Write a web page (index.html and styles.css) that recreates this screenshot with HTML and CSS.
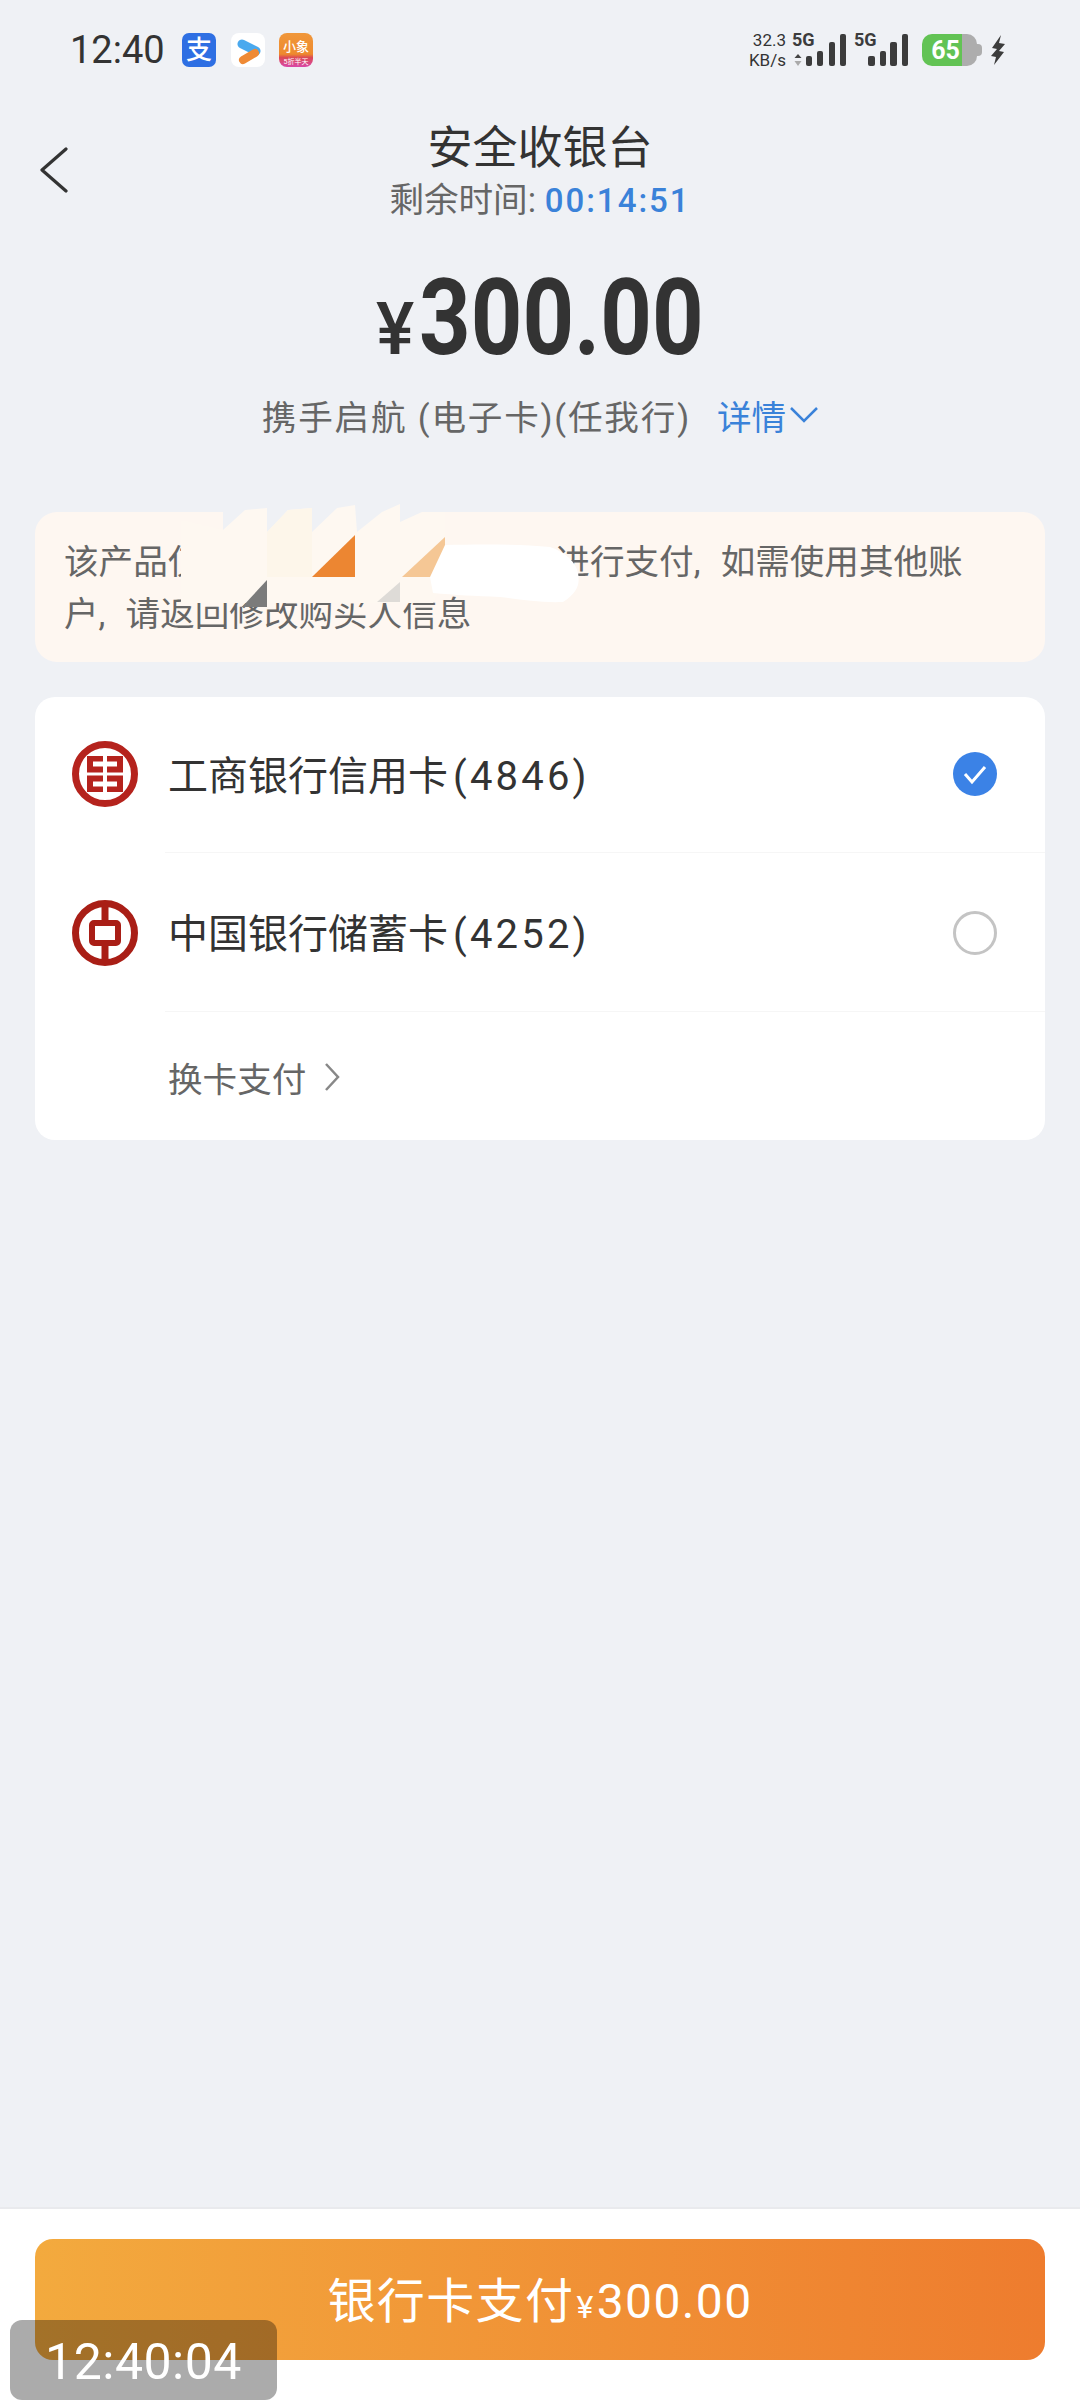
FILE: index.html
```html
<!DOCTYPE html>
<html lang="zh-CN">
<head>
    <meta charset="UTF-8">
    <meta name="viewport" content="width=device-width, initial-scale=1.0">
    <title>安全收银台</title>
    <link rel="stylesheet" href="styles.css">
</head>
<body>
    <div class="status-bar">
        <span class="clock">12:40</span>
        <svg class="app-icon" viewBox="0 0 34 34">
            <rect width="34" height="34" rx="7" fill="#2e6fe3"/>
            <text x="17" y="26" text-anchor="middle" class="app-zhi">支</text>
        </svg>
        <svg class="app-icon" viewBox="0 0 34 34">
            <rect width="34" height="34" rx="8" fill="#fff"/>
            <path d="M11 11 L25 18" stroke="#4aa9ee" stroke-width="9" stroke-linecap="round"/>
            <path d="M24 20 L12 27" stroke="#ef8a35" stroke-width="8" stroke-linecap="round"/>
        </svg>
        <svg class="app-icon" viewBox="0 0 34 34">
            <defs>
                <linearGradient id="xd" x1="0" y1="0" x2="0" y2="1">
                    <stop offset="0" stop-color="#f0973a"/>
                    <stop offset="0.62" stop-color="#ee8a2e"/>
                    <stop offset="0.72" stop-color="#dc4a55"/>
                    <stop offset="1" stop-color="#d848a8"/>
                </linearGradient>
            </defs>
            <rect width="34" height="34" rx="8" fill="url(#xd)"/>
            <text x="17" y="18" text-anchor="middle" class="app-xd">小象</text>
            <text x="17" y="31" text-anchor="middle" class="app-xd-sub">5折半天</text>
        </svg>

        <div class="status-right">
            <div class="net-speed"><span>32.3</span><span>KB/s</span></div>
            <svg class="signal" width="60" height="44" viewBox="0 -5 60 44">
                <text x="0" y="13" class="sig-label">5G</text>
                <path d="M6 21 L9.5 25 H2.5 Z" fill="#444"/>
                <path d="M6 33 L9.5 28 H2.5 Z" fill="#aaa"/>
                <rect x="14" y="23" width="6" height="10" rx="2" fill="#3c3c3c"/>
                <rect x="25" y="18" width="6" height="15" rx="2" fill="#3c3c3c"/>
                <rect x="37" y="9" width="6" height="24" rx="2" fill="#3c3c3c"/>
                <rect x="48" y="1" width="6" height="32" rx="2" fill="#3c3c3c"/>
            </svg>
            <svg class="signal sig2" width="56" height="44" viewBox="0 -5 56 44">
                <text x="0" y="13" class="sig-label">5G</text>
                <rect x="14" y="23" width="7" height="10" rx="2" fill="#3c3c3c"/>
                <rect x="26" y="18" width="6" height="15" rx="2" fill="#3c3c3c"/>
                <rect x="36" y="9" width="7" height="24" rx="2" fill="#3c3c3c"/>
                <rect x="48" y="1" width="6" height="32" rx="2" fill="#3c3c3c"/>
            </svg>
            <div class="battery"><span class="battery-num">65</span></div>
            <svg class="bolt" width="14" height="30" viewBox="0 0 14 30">
                <path d="M10 0 L1 13 L6 14 L0 21 L5 22 L3 30 L13 17 L8 16 L14 9 L8 8 Z" fill="#3c3c3c"/>
            </svg>
        </div>
    </div>

    <div class="nav">
        <svg class="back" width="30" height="46" viewBox="0 0 30 46">
            <path d="M26 2 L2 23 L26 44" fill="none" stroke="#333" stroke-width="3.2" stroke-linecap="round" stroke-linejoin="round"/>
        </svg>
        <h1 class="nav-title">安全收银台</h1>
        <p class="nav-sub">剩余时间: <b class="countdown">00:14:51</b></p>
    </div>

    <div class="amount"><span class="amount-yen">¥</span><span class="amount-num">300.00</span></div>

    <div class="product">
        <span class="product-name">携手启航 (电子卡)(任我行)</span>
        <span class="detail">详情</span>
        <svg width="28" height="16" viewBox="0 0 28 16">
            <path d="M1 1 L14 14 L27 1" fill="none" stroke="#3a82d9" stroke-width="2.5"/>
        </svg>
    </div>

    <div class="notice">
        <p class="notice-text">该产品仅<span class="notice-gap"></span>进行支付<span class="comma">,</span>如需使用其他账<br>户<span class="comma">,</span>请返回修改购买人信息</p>
        <!-- the sawtooth cover painted over the hidden part of the message -->
        <svg class="scribble" width="400" height="110" viewBox="0 0 400 110">
            <rect x="43" y="11" width="199" height="23" fill="#eff1f5"/>
            <path d="M1 20 L43 30 L65 10 L87 8 V32 L108 10 L132 8 V32 L157 8 L175 5 L177 32 L202 12 L220 4 V22 L242 12 H265 V77 L253 103 H1 Z" fill="#fef8f1"/>
            <path d="M87 32 L108 10 L132 8 V77 H87 Z" fill="#fdf6ea"/>
            <path d="M62 107 L87 80 V107 Z" fill="#7b7b7b"/>
            <path d="M197 102 L220 82 V102 Z" fill="#dedbd7"/>
            <path d="M132 77 L175 35 V77 Z" fill="#ec8632"/>
            <path d="M222 77 L265 37 V77 Z" fill="#f5c795"/>
            <path d="M250 77 L265 45 C300 44 340 44 370 47 C385 52 396 62 398 73 C400 84 398 92 383 102 C360 103 340 99 320 97 C295 96 275 95 253 93 Z" fill="#fff"/>
        </svg>
    </div>

    <div class="card">
        <div class="bank-row bank-row-first">
            <svg class="bank-logo" viewBox="0 0 66 66">
                <circle cx="33" cy="33" r="29.5" fill="none" stroke="#b5231d" stroke-width="7"/>
                <path d="M15 15 H31 V20.5 H21 V25.5 H31 V31.5 H15 Z M15 34.5 H31 V40.5 H21 V45.5 H31 V51 H15 Z M51 15 H35 V20.5 H45 V25.5 H35 V31.5 H51 Z M51 34.5 H35 V40.5 H45 V45.5 H35 V51 H51 Z" fill="#b5231d"/>
            </svg>
            <span class="bank-name">工商银行信用卡<span class="bank-num">(4846)</span></span>
            <svg class="radio" viewBox="0 0 44 44">
                <circle cx="22" cy="22" r="22" fill="#3b82e6"/>
                <path d="M12 22 L19 30 L32 15" fill="none" stroke="#fff" stroke-width="3"/>
            </svg>
        </div>
        <div class="bank-row">
            <svg class="bank-logo" viewBox="0 0 66 66">
                <circle cx="33" cy="33" r="29.5" fill="none" stroke="#a91e16" stroke-width="7"/>
                <path d="M33 3 V63" stroke="#a91e16" stroke-width="7"/>
                <rect x="20" y="23" width="26" height="20" rx="2" fill="#fff" stroke="#a91e16" stroke-width="6"/>
            </svg>
            <span class="bank-name">中国银行储蓄卡<span class="bank-num">(4252)</span></span>
            <svg class="radio" viewBox="0 0 44 44">
                <circle cx="22" cy="22" r="20.5" fill="#fff" stroke="#c4c4c4" stroke-width="3"/>
            </svg>
        </div>
        <div class="change-card">
            <span>换卡支付</span>
            <svg width="16" height="30" viewBox="0 0 16 30">
                <path d="M2 2 L14 15 L2 28" fill="none" stroke="#888" stroke-width="2.5"/>
            </svg>
        </div>
    </div>

    <div class="spacer"></div>

    <div class="footer">
        <button class="pay-btn">银行卡支付<span class="pay-yen">¥</span>300.00</button>
    </div>

    <div class="stamp">12:40:04</div>
</body>
</html>
```

FILE: styles.css
```css
* {
    box-sizing: border-box;
}

html, body {
    margin: 0;
    padding: 0;
}

body {
    position: relative;
    display: flex;
    flex-direction: column;
    width: 1080px;
    height: 2400px;
    overflow: hidden;
    background-color: #eff1f5;
    color: #333;
    font-family: Roboto, "Noto Sans CJK SC", sans-serif;
}

.status-bar {
    display: flex;
    align-items: center;
    height: 100px;
    padding-left: 70px;
    padding-right: 75px;
}

.clock {
    width: 112px;
    font-size: 38px;
    color: #333;
}

.app-icon {
    width: 34px;
    height: 34px;
    margin-right: 14.5px;
}

.app-zhi {
    font-size: 26px;
    font-weight: 500;
    fill: #fff;
}

.app-xd {
    font-size: 13px;
    font-weight: 500;
    fill: #fff;
}

.app-xd-sub {
    font-size: 7px;
    fill: #fff;
}

.status-right {
    display: flex;
    align-items: center;
    margin-left: auto;
}

.net-speed {
    display: flex;
    flex-direction: column;
    align-items: flex-end;
    width: 40px;
    margin-right: 6px;
    font-size: 17px;
    line-height: 20px;
    white-space: nowrap;
}

.sig-label {
    font-size: 18px;
    font-weight: 700;
    fill: #3c3c3c;
}

.sig2 {
    margin-left: 2px;
}

.battery {
    position: relative;
    display: flex;
    align-items: center;
    justify-content: center;
    width: 55px;
    height: 32px;
    margin-left: 12px;
    border-radius: 10px;
    background: linear-gradient(90deg, #62c354 0, #62c354 73%, #adadad 73%, #adadad 100%);
}

.battery::after {
    content: "";
    position: absolute;
    right: -5px;
    top: 10px;
    width: 5px;
    height: 12px;
    border-radius: 0 4px 4px 0;
    background-color: #adadad;
}

.battery-num {
    margin-right: 8px;
    font-size: 25px;
    font-weight: 700;
    color: #fff;
}

.bolt {
    margin-left: 14px;
}

.nav {
    position: relative;
    height: 128px;
    text-align: center;
}

.back {
    position: absolute;
    left: 40px;
    top: 47px;
}

.nav-title {
    margin: 0;
    padding-top: 21px;
    font-size: 45px;
    line-height: 55px;
    font-weight: 400;
}

.nav-sub {
    margin: 0;
    font-size: 34.6px;
    line-height: 48px;
    color: #666;
}

.countdown {
    font-weight: 500;
    font-size: 33px;
    letter-spacing: 2px;
    color: #3a82d9;
}

.amount {
    display: flex;
    align-items: baseline;
    justify-content: center;
    margin-top: 30px;
    height: 120px;
    line-height: 120px;
}

.amount-yen {
    margin-right: 5px;
    font-size: 72px;
    font-weight: 500;
}

.amount-num {
    display: inline-block;
    width: 285px;
    font-size: 106px;
    font-weight: 700;
    white-space: nowrap;
    transform: scaleX(0.85);
    transform-origin: left center;
}

.product {
    display: flex;
    align-items: center;
    justify-content: center;
    margin-top: 12px;
    height: 50px;
    font-size: 34.6px;
    color: #666;
}

.product-name {
    letter-spacing: 1.8px;
}

.detail {
    margin-left: 26px;
    margin-right: 4px;
    color: #3a82d9;
}

.notice {
    position: relative;
    height: 150px;
    margin: 72px 35px 0;
    padding: 24px 29px;
    border-radius: 22px;
    background-color: #fef7f1;
}

.notice-text {
    margin: 0;
    font-size: 34.6px;
    line-height: 52px;
    color: #666;
}

.notice-gap {
    display: inline-block;
    width: 353px;
}

.comma {
    display: inline-block;
    width: 27px;
}

.scribble {
    position: absolute;
    left: 145px;
    top: -12px;
}

.card {
    display: flex;
    flex-direction: column;
    height: 443px;
    margin: 35px 35px 0;
    border-radius: 20px;
    background-color: #fff;
}

.bank-row {
    position: relative;
    display: flex;
    align-items: center;
    height: 159px;
    padding-left: 37px;
    padding-right: 48px;
}

.bank-row-first {
    height: 156px;
    padding-bottom: 2px;
}

.bank-row::after {
    content: "";
    position: absolute;
    left: 130px;
    right: 0;
    bottom: 0;
    height: 1px;
    background-color: #f6f6f6;
}

.bank-logo {
    width: 66px;
    height: 66px;
    margin-right: 30px;
}

.bank-name {
    padding-bottom: 3px;
    font-size: 40px;
    color: #333;
}

.bank-num {
    margin-left: 5px;
    letter-spacing: 3.2px;
}

.radio {
    width: 44px;
    height: 44px;
    margin-left: auto;
}

.change-card {
    display: flex;
    align-items: center;
    gap: 18px;
    height: 128px;
    padding-top: 2px;
    padding-left: 133px;
    font-size: 34.6px;
    color: #666;
}

.spacer {
    flex: 1;
}

.footer {
    height: 193px;
    padding: 30px 35px 0;
    border-top: 2px solid #e9eaed;
    background-color: #fff;
}

.pay-btn {
    display: block;
    width: 100%;
    height: 121px;
    padding-bottom: 6px;
    border: none;
    border-radius: 18px;
    background: linear-gradient(90deg, #f3aa3e, #ee7c2e);
    color: #fff;
    font-family: inherit;
    font-size: 48px;
    letter-spacing: 1.4px;
}

.pay-yen {
    margin: 0 2px;
    font-size: 32px;
}

.stamp {
    position: absolute;
    left: 10px;
    bottom: 0;
    width: 267px;
    height: 80px;
    border-radius: 12px;
    background-color: rgba(0, 0, 0, 0.33);
    color: #fff;
    font-size: 50px;
    letter-spacing: 0.5px;
    line-height: 84px;
    text-align: center;
}
```
